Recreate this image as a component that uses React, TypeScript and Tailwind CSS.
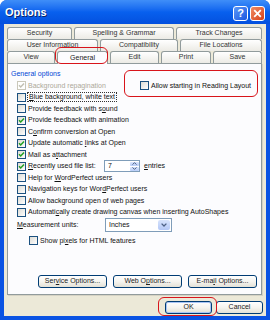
import React from "react";

function Box({ checked = false, disabled = false }: { checked?: boolean; disabled?: boolean }) {
  return (
    <span
      className={
        disabled
          ? "relative block w-[9px] h-[9px] shrink-0 border border-[#CAC8BB] bg-white"
          : "relative block w-[9px] h-[9px] shrink-0 border border-[#1C5180] bg-gradient-to-br from-[#DCDBD5] to-[#FFFFFF]"
      }
    >
      {checked && (
        <svg width="7" height="7" viewBox="0 0 7 7" className="absolute left-0 top-0">
          <path d="M1 3.2 L2.7 5 L6 1.5" fill="none" stroke={disabled ? "#C2C0B4" : "#21A121"} strokeWidth="1.5" />
        </svg>
      )}
    </span>
  );
}

function Row({
  children,
  checked = false,
  disabled = false,
  focus = false,
}: {
  children: React.ReactNode;
  checked?: boolean;
  disabled?: boolean;
  focus?: boolean;
}) {
  return (
    <div className="flex items-center h-[11.5px] pl-[9px]">
      <Box checked={checked} disabled={disabled} />
      <span
        className={
          focus
            ? "ml-[1px] px-[1px] border border-dotted border-[#333] leading-[8px] text-[#111] whitespace-nowrap"
            : disabled
            ? "ml-[2px] text-[#ACA899] whitespace-nowrap"
            : "ml-[2px] text-[#111] whitespace-nowrap"
        }
      >
        {children}
      </span>
    </div>
  );
}

function Tab({ className, children }: { className: string; children: React.ReactNode }) {
  return (
    <div
      className={
        "flex items-center justify-center h-[12px] border-t border-l border-r border-[#919B9C] rounded-t-[3px] bg-gradient-to-b from-[#FFFFFF] to-[#ECEBE5] text-[7px] text-[#333] whitespace-nowrap " +
        className
      }
    >
      {children}
    </div>
  );
}

function XpButton({ className, children }: { className: string; children: React.ReactNode }) {
  return (
    <div
      className={
        "flex items-center justify-center h-[13px] border border-[#003C74] rounded-[3px] bg-gradient-to-b from-[#FFFFFF] via-[#F5F4EF] to-[#E3E1D6] text-[7px] text-[#222] whitespace-nowrap " +
        className
      }
    >
      {children}
    </div>
  );
}

export default function App() {
  return (
    <div className="relative w-[270px] h-[320px] bg-[#0A53E3] rounded-t-[7px] flex flex-col overflow-hidden font-['Liberation_Sans',Arial,sans-serif]">
      {/* Title bar */}
      <div className="h-[24px] shrink-0 flex items-center pl-[5px] pr-[5px] bg-gradient-to-b from-[#3F8EF8] via-[#0860EE] to-[#0450DE]">
        <span className="text-[11px] font-bold text-white [text-shadow:1px_1px_0_#0A246A]">Options</span>
        <div className="ml-auto flex gap-[2px] mt-[2px]">
          <div className="w-[15px] h-[15px] rounded-[3px] border border-white bg-gradient-to-br from-[#5C97F7] to-[#1C55E0] flex items-center justify-center text-white text-[11px] font-bold leading-none">
            ?
          </div>
          <div className="w-[15px] h-[15px] rounded-[3px] border border-white bg-gradient-to-br from-[#F08A62] to-[#D63E13] flex items-center justify-center">
            <svg width="9" height="9" viewBox="0 0 9 9">
              <path d="M1.2 1.2 L7.8 7.8 M7.8 1.2 L1.2 7.8" stroke="white" strokeWidth="1.8" />
            </svg>
          </div>
        </div>
      </div>

      {/* Body */}
      <div className="flex-1 mx-[4px] mb-[4px] bg-[#ECE9D8] flex flex-col pt-[3px] pl-[3px] pr-[4px] text-[7px]">
        {/* Tabs */}
        <div className="flex gap-[2px]">
          <Tab className="w-[65px]">Security</Tab>
          <Tab className="w-[100px]">Spelling &amp; Grammar</Tab>
          <Tab className="w-[86px]">Track Changes</Tab>
        </div>
        <div className="flex gap-[2px]">
          <Tab className="w-[91px]">User Information</Tab>
          <Tab className="w-[78px]">Compatibility</Tab>
          <Tab className="w-[82px]">File Locations</Tab>
        </div>
        <div className="flex gap-[2px] items-end h-[12px]">
          <Tab className="w-[48px]">View</Tab>
          <div className="relative z-10 w-[51px] h-[13px] mb-[-1px] flex items-center justify-center border-t border-l border-r border-[#919B9C] rounded-t-[3px] bg-[#FCFCFE] text-[7px] text-[#222]">
            General
          </div>
          <Tab className="w-[49px]">Edit</Tab>
          <Tab className="w-[50px]">Print</Tab>
          <Tab className="w-[49px]">Save</Tab>
        </div>

        {/* Panel */}
        <div className="h-[232px] shrink-0 flex flex-col border border-[#919B9C] bg-[#FCFCFE] pt-[5px] pb-[6px] shadow-[1px_1px_0_#D6D3C4]">
          <div className="h-[11px] pl-[3px] flex items-center text-[#0046D5]">General options</div>
          <div className="flex items-center h-[11.5px] pl-[9px]">
            <div className="w-[123px] flex items-center">
              <Box checked disabled />
              <span className="ml-[2px] text-[#ACA899] whitespace-nowrap">Background repagination</span>
            </div>
            <Box />
            <span className="ml-[2px] text-[#111] whitespace-nowrap">
              Allow starting in Readin<u>g</u> Layout
            </span>
          </div>
          <Row focus>
            <u>B</u>lue background, white text
          </Row>
          <Row>
            Provide feedback with s<u>o</u>und
          </Row>
          <Row checked>Provide feedback with animation</Row>
          <Row>
            C<u>o</u>nfirm conversion at Open
          </Row>
          <Row checked>
            Update automatic <u>l</u>inks at Open
          </Row>
          <Row checked>
            Mail as a<u>t</u>tachment
          </Row>
          <div className="flex items-center h-[11.5px] pl-[9px]">
            <div className="w-[87px] flex items-center">
              <Box checked />
              <span className="ml-[2px] text-[#111] whitespace-nowrap">
                <u>R</u>ecently used file list:
              </span>
            </div>
            <div className="w-[36px] h-[12px] flex border border-[#7F9DB9] bg-white">
              <span className="flex-1 pl-[3px] flex items-center text-[#111]">7</span>
              <div className="w-[10px] flex flex-col gap-[1px] p-[0.5px]">
                <div className="flex-1 rounded-[1px] bg-gradient-to-b from-[#D8E4FC] to-[#B8CDF8] flex items-center justify-center">
                  <svg width="5" height="3" viewBox="0 0 5 3">
                    <path d="M0.5 2.6 L2.5 0.6 L4.5 2.6" fill="none" stroke="#4D6185" strokeWidth="1" />
                  </svg>
                </div>
                <div className="flex-1 rounded-[1px] bg-gradient-to-b from-[#D8E4FC] to-[#B8CDF8] flex items-center justify-center">
                  <svg width="5" height="3" viewBox="0 0 5 3">
                    <path d="M0.5 0.4 L2.5 2.4 L4.5 0.4" fill="none" stroke="#4D6185" strokeWidth="1" />
                  </svg>
                </div>
              </div>
            </div>
            <span className="ml-[4px] text-[#111]">
              <u>e</u>ntries
            </span>
          </div>
          <Row>
            Help for <u>W</u>ordPerfect users
          </Row>
          <Row>
            Navigation keys for Wor<u>d</u>Perfect users
          </Row>
          <Row>Allow background open of web pages</Row>
          <Row>
            Automati<u>c</u>ally create drawing canvas when inserting AutoShapes
          </Row>
          <div className="flex items-center h-[14px] pl-[9px]">
            <span className="w-[88px] text-[#111] whitespace-nowrap">
              <u>M</u>easurement units:
            </span>
            <div className="w-[67px] h-[14px] flex border border-[#7F9DB9] bg-white p-[1px]">
              <span className="flex-1 pl-[2px] flex items-center text-[#111]">Inches</span>
              <div className="w-[12px] rounded-[2px] bg-gradient-to-b from-[#D8E4FC] to-[#B4C8F6] flex items-center justify-center">
                <svg width="6" height="4" viewBox="0 0 6 4">
                  <path d="M0.6 0.6 L3 3 L5.4 0.6" fill="none" stroke="#4D6185" strokeWidth="1.3" />
                </svg>
              </div>
            </div>
          </div>
          <div className="flex items-center h-[11.5px] pl-[21px] mt-[3px]">
            <Box />
            <span className="ml-[2px] text-[#111] whitespace-nowrap">
              Show pi<u>x</u>els for HTML features
            </span>
          </div>
          <div className="mt-auto flex pl-[30px] gap-[6px]">
            <XpButton className="w-[69px]">
              Ser<u>v</u>ice Options...
            </XpButton>
            <XpButton className="w-[69px]">
              Web O<u>p</u>tions...
            </XpButton>
            <XpButton className="w-[69px]">
              E-ma<u>i</u>l Options...
            </XpButton>
          </div>
        </div>

        {/* OK / Cancel */}
        <div className="mt-[6px] flex justify-end gap-[4px] mr-[-1px]">
          <XpButton className="w-[47px] shadow-[inset_0_0_0_1px_#A9C5F5]">OK</XpButton>
          <XpButton className="w-[47px]">Cancel</XpButton>
        </div>
      </div>

      {/* Red annotation overlays */}
      <div className="absolute left-[55px] top-[47px] w-[53px] h-[17px] border-[1.5px] border-[#D8141B] rounded-[6px] pointer-events-none z-20" />
      <div className="absolute left-[124px] top-[70px] w-[134px] h-[27px] border-[1.5px] border-[#D8141B] rounded-[6px] pointer-events-none z-20" />
      <div className="absolute left-[158px] top-[297px] w-[59px] h-[19px] border-[1.5px] border-[#D8141B] rounded-[6px] pointer-events-none z-20" />
    </div>
  );
}
